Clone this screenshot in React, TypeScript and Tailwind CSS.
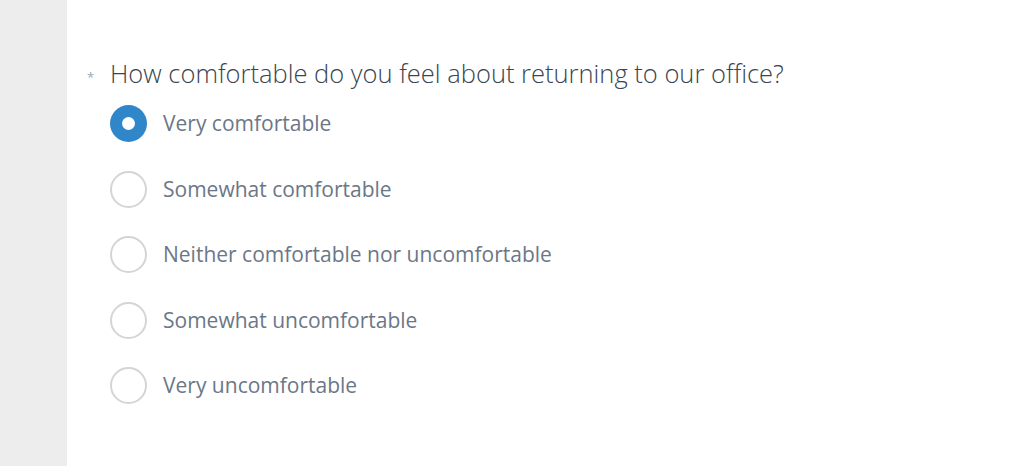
import React from "react";

const options = [
  "Very comfortable",
  "Somewhat comfortable",
  "Neither comfortable nor uncomfortable",
  "Somewhat uncomfortable",
  "Very uncomfortable",
];

export default function App() {
  return (
    <div className="flex h-[466px] w-[1024px] overflow-hidden bg-white" style={{ fontFamily: "'Open Sans', sans-serif" }}>
      <div className="w-[67px] shrink-0 bg-[#ededed]" />
      <div className="flex-1 pl-[20px] pt-[55px]">
        <div className="flex items-center">
          <span className="w-[23px] text-[13px] text-[#9aa6b5] leading-none pt-[8px]">*</span>
          <h1 className="text-[25.5px] font-light leading-[36px] text-[#3a4550]">
            How comfortable do you feel about returning to our office?
          </h1>
        </div>
        <div className="ml-[23px] mt-[14px] flex flex-col gap-[28.5px]">
          {options.map((o, i) => (
            <label key={o} className="flex items-center gap-[16px]">
              {i === 0 ? (
                <span className="flex h-[37px] w-[37px] items-center justify-center rounded-full bg-[#2f86c8]">
                  <span className="h-[13px] w-[13px] rounded-full bg-white" />
                </span>
              ) : (
                <span className="h-[37px] w-[37px] rounded-full border-2 border-[#d5d5d5] bg-white" />
              )}
              <span className="text-[21px] leading-[37px] text-[#6b7787]">{o}</span>
            </label>
          ))}
        </div>
      </div>
    </div>
  );
}
